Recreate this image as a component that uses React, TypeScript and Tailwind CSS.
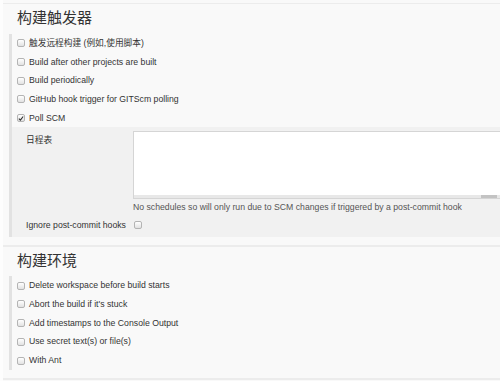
const sans = { fontFamily: '"Liberation Sans", Arial, "Noto Sans CJK SC", sans-serif' };

function Box({ checked = false }: { checked?: boolean }) {
  return (
    <span className="flex h-[8px] w-[8px] shrink-0 items-center justify-center rounded-[2px] border border-[#b4b4b4] bg-gradient-to-b from-white to-[#e2e2e2]">
      {checked && (
        <svg width="7" height="7" viewBox="0 0 7 7">
          <path d="M1 3.6 L2.8 5.4 L6 1.2" stroke="#333" strokeWidth="1.3" fill="none" />
        </svg>
      )}
    </span>
  );
}

function Row({ label, checked }: { label: string; checked?: boolean }) {
  return (
    <div className="flex h-[18.7px] items-center gap-[4px] pl-[5px] text-[8.7px] text-[#333]">
      <Box checked={checked} />
      <span>{label}</span>
    </div>
  );
}

function Heading({ text }: { text: string }) {
  return (
    <div className="flex h-[28px] items-center pb-[2px] pl-[14px] text-[15px] text-[#333]" style={{ fontFamily: '"Noto Sans CJK SC", serif' }}>
      {text}
    </div>
  );
}

export default function App() {
  return (
    <div className="h-[381px] w-[500px] overflow-hidden border-l-[3px] border-[#fdfdfd] bg-[#f9f9f9]" style={sans}>
      <div className="mt-[3px] border-t border-[#ececec]">
        <Heading text="构建触发器" />
        <div className="ml-[6px] mt-[2px] border-l-[3px] border-[#e2e2e2]">
          <Row label="触发远程构建 (例如,使用脚本)" />
          <Row label="Build after other projects are built" />
          <Row label="Build periodically" />
          <Row label="GitHub hook trigger for GITScm polling" />
          <Row label="Poll SCM" checked />
          <div className="h-[110px] bg-[#f1f1f1] pt-[4px] text-[8.7px] text-[#333]">
            <div className="flex">
              <div className="w-[121px] shrink-0 pl-[14px] pt-[3px]">日程表</div>
              <div className="flex h-[68px] flex-1 flex-col border border-r-0 border-[#d5d5d5] bg-white">
                <div className="flex-1" />
                <div className="flex h-[3px] justify-end bg-[#e8e8e8] pr-[3px]">
                  <div className="w-[16px] bg-[#c3c3c3]" />
                </div>
              </div>
            </div>
            <div className="ml-[121px] flex h-[17px] items-center text-[#555]">
              No schedules so will only run due to SCM changes if triggered by a post-commit hook
            </div>
            <div className="flex h-[18px] items-center gap-[8px] pl-[14px]">
              <span>Ignore post-commit hooks</span>
              <Box />
            </div>
          </div>
        </div>
      </div>
      <div className="mt-[8px] border-t-[2px] border-[#ececec]">
        <Heading text="构建环境" />
        <div className="ml-[6px] mt-[1px] border-l-[3px] border-[#e2e2e2]">
          <Row label="Delete workspace before build starts" />
          <Row label="Abort the build if it's stuck" />
          <Row label="Add timestamps to the Console Output" />
          <Row label="Use secret text(s) or file(s)" />
          <Row label="With Ant" />
        </div>
        <div className="mt-[8px] border-t-[2px] border-[#ececec]" />
      </div>
    </div>
  );
}
